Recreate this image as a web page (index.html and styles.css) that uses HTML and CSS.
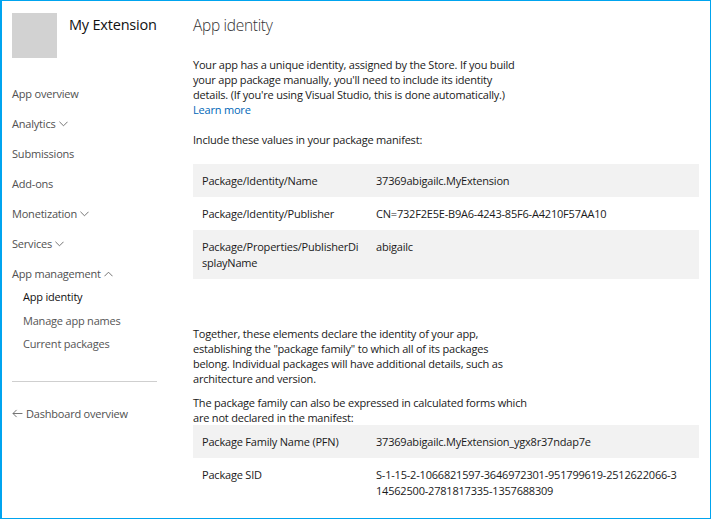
FILE: index.html
```html
<!DOCTYPE html>
<html lang="en">
<head>
<meta charset="utf-8">
<title>App identity</title>
<link rel="stylesheet" href="styles.css">
</head>
<body>
<div class="frame">
  <aside class="sidebar">
    <div class="app-head">
      <div class="app-logo"></div>
      <div class="app-name">My Extension</div>
    </div>
    <nav class="nav">
      <a class="nav-item">App overview</a>
      <a class="nav-item">Analytics <svg class="chev" viewBox="0 0 10 6"><path d="M0.5 0.5 L5 5 L9.5 0.5"/></svg></a>
      <a class="nav-item">Submissions</a>
      <a class="nav-item">Add-ons</a>
      <a class="nav-item">Monetization <svg class="chev" viewBox="0 0 10 6"><path d="M0.5 0.5 L5 5 L9.5 0.5"/></svg></a>
      <a class="nav-item">Services <svg class="chev" viewBox="0 0 10 6"><path d="M0.5 0.5 L5 5 L9.5 0.5"/></svg></a>
      <a class="nav-item">App management <svg class="chev" viewBox="0 0 10 6"><path d="M0.5 5.5 L5 1 L9.5 5.5"/></svg></a>
      <div class="subnav">
        <a class="sub-item active">App identity</a>
        <a class="sub-item">Manage app names</a>
        <a class="sub-item">Current packages</a>
      </div>
    </nav>
    <hr class="divider">
    <a class="back"><svg class="arrow" viewBox="0 0 12 10"><path d="M11.5 5 H1 M5 1 L1 5 L5 9"/></svg>Dashboard overview</a>
  </aside>
  <main class="main">
    <h1 class="title">App identity</h1>
    <p class="text intro">Your app has a unique identity, assigned by the Store. If you build your app package manually, you'll need to include its identity details. (If you're using Visual Studio, this is done automatically.)<br><a class="link">Learn more</a></p>
    <p class="text include">Include these values in your package manifest:</p>
    <div class="table">
      <div class="row shaded"><div class="key">Package/Identity/Name</div><div class="val">37369abigailc.MyExtension</div></div>
      <div class="row"><div class="key">Package/Identity/Publisher</div><div class="val">CN=732F2E5E-B9A6-4243-85F6-A4210F57AA10</div></div>
      <div class="row shaded"><div class="key">Package/Properties/PublisherDisplayName</div><div class="val">abigailc</div></div>
    </div>
    <p class="text together">Together, these elements declare the identity of your app, establishing the "package family" to which all of its packages belong. Individual packages will have additional details, such as architecture and version.</p>
    <p class="text family">The package family can also be expressed in calculated forms which are not declared in the manifest:</p>
    <div class="table">
      <div class="row shaded"><div class="key">Package Family Name (PFN)</div><div class="val">37369abigailc.MyExtension_ygx8r37ndap7e</div></div>
      <div class="row"><div class="key">Package SID</div><div class="val">S-1-15-2-1066821597-3646972301-951799619-2512622066-314562500-2781817335-1357688309</div></div>
    </div>
  </main>
</div>
</body>
</html>
```
FILE: styles.css
```css
* { box-sizing: border-box; }
html, body { margin: 0; padding: 0; background: #fff; }
body {
  font-family: "Open Sans", "Noto Sans", sans-serif;
  font-size: 11px;
  letter-spacing: -0.2px;
  color: #1a1a1a;
}
.frame {
  width: 711px;
  height: 519px;
  border: 1px solid #00a4ef;
  border-left-width: 2px;
  display: grid;
  grid-template-columns: 191px 1fr;
  overflow: hidden;
}
.sidebar {
  padding: 12px 0 0 10px;
  display: flex;
  flex-direction: column;
}
.app-head {
  display: flex;
  align-items: flex-start;
  gap: 12px;
}
.app-logo {
  width: 45px;
  height: 45px;
  background: #d2d2d2;
  flex: none;
}
.app-name {
  font-size: 14.5px;
  color: #111;
  line-height: 20px;
  margin-top: 2px;
}
.nav {
  display: flex;
  flex-direction: column;
  margin-top: 20px;
}
.nav-item {
  display: flex;
  align-items: center;
  gap: 3px;
  height: 30px;
  color: #505050;
}
.chev {
  width: 9px;
  height: 6px;
  margin-top: 2px;
  fill: none;
  stroke: #666;
  stroke-width: 1;
}
.subnav {
  display: flex;
  flex-direction: column;
  padding-left: 11px;
  margin-top: -3px;
}
.sub-item {
  height: 23.5px;
  display: flex;
  align-items: center;
  color: #555;
}
.sub-item.active { color: #111; }
.divider {
  width: 145px;
  margin: 25px 0 0 0;
  border: none;
  border-top: 1px solid #cfcfcf;
  height: 0;
}
.back {
  display: flex;
  align-items: center;
  gap: 3px;
  margin-top: 24px;
  color: #505050;
}
.arrow {
  width: 11px;
  height: 9px;
  fill: none;
  stroke: #666;
  stroke-width: 1;
}
.main {
  padding: 12px 0 0 0;
  width: 506px;
}
.title {
  margin: 0;
  font-size: 15.5px;
  letter-spacing: -0.3px;
  font-weight: 300;
  color: #333;
  line-height: 24px;
}
.text {
  margin: 0;
  line-height: 15px;
  max-width: 335px;
  color: #1a1a1a;
}
.intro { margin-top: 19.5px; }
.link { color: #0067b8; }
.include { margin-top: 15px; margin-bottom: 17.5px; }
.table { display: flex; flex-direction: column; }
.row {
  display: grid;
  grid-template-columns: 174px 1fr;
  padding: 9px 9px 8px 9px;
  line-height: 16px;
}
.row.shaded { background: #f2f2f2; }
.key { padding-right: 17px; word-break: break-all; }
.val { word-break: break-all; padding-right: 8px; }
.together { margin-top: 47px; max-width: 326px; }
.family { margin-top: 9px; max-width: 340px; }
```
